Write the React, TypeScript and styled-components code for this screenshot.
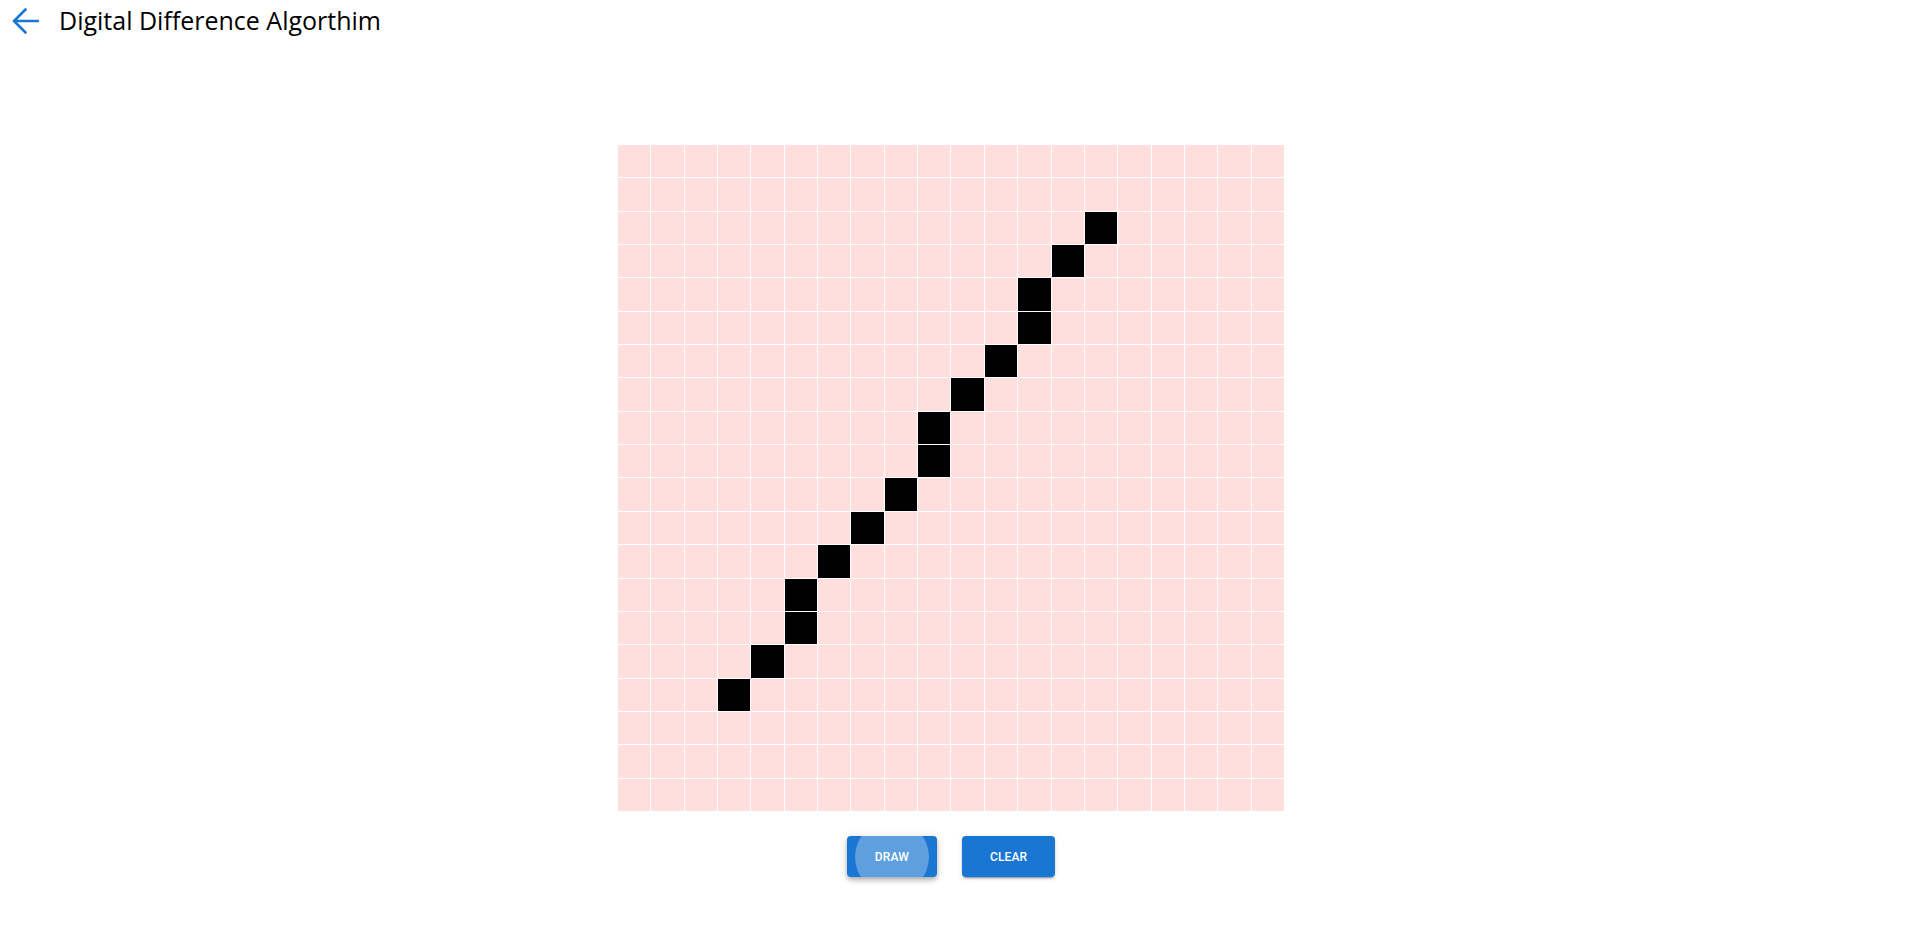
import React from "react";
import styled, { createGlobalStyle } from "styled-components";

const GlobalStyle = createGlobalStyle`
  html, body { margin: 0; padding: 0; background: #ffffff; }
  body { font-family: "Open Sans", "Noto Sans", sans-serif; }
`;

const Page = styled.div`
  display: flex;
  flex-direction: column;
  min-height: 937px;
`;

const Header = styled.header`
  display: flex;
  align-items: center;
  height: 40px;
  padding-left: 11px;
  gap: 20px;
`;

const BackButton = styled.button`
  display: flex;
  align-items: center;
  justify-content: center;
  padding: 0;
  border: none;
  background: transparent;
  cursor: pointer;
  width: 28px;
  height: 28px;
  margin-top: 1px;
`;

const Title = styled.h1`
  margin: 0;
  font-family: "Open Sans", "Noto Sans", sans-serif;
  font-size: 25px;
  font-weight: 500;
  color: #000;
  letter-spacing: 0;
`;

const Main = styled.main`
  display: flex;
  flex-direction: column;
  align-items: center;
  padding-top: 105px;
  padding-right: 9px;
  gap: 25px;
`;

const Grid = styled.div`
  display: grid;
  grid-template-columns: repeat(20, 1fr);
  grid-template-rows: repeat(20, 1fr);
  gap: 1px;
  width: 666px;
  height: 666px;
  background: #ffffff;
`;

const Cell = styled.div<{ $on: boolean }>`
  background: ${(p) => (p.$on ? "#000000" : "#ffdede")};
`;

const Actions = styled.div`
  display: flex;
  gap: 25px;
`;

const Button = styled.button<{ $raised?: boolean }>`
  position: relative;
  overflow: hidden;
  height: 41px;
  padding: 0 28px;
  border: none;
  border-radius: 4px;
  background: #1976d2;
  color: #ffffff;
  font-family: Roboto, "Liberation Sans", sans-serif;
  font-weight: 500;
  font-size: 12px;
  letter-spacing: 0.15px;
  text-transform: uppercase;
  cursor: pointer;
  box-shadow: ${(p) =>
    p.$raised
      ? "0px 2px 4px -1px rgba(0,0,0,0.2), 0px 4px 5px 0px rgba(0,0,0,0.14), 0px 1px 10px 0px rgba(0,0,0,0.12)"
      : "0px 3px 1px -2px rgba(0,0,0,0.2), 0px 2px 2px 0px rgba(0,0,0,0.14), 0px 1px 5px 0px rgba(0,0,0,0.12)"};
`;

const Ripple = styled.span`
  position: absolute;
  left: 50%;
  top: 50%;
  width: 74px;
  height: 74px;
  margin-left: -37px;
  margin-top: -37px;
  border-radius: 50%;
  background: rgba(255, 255, 255, 0.3);
  pointer-events: none;
`;

const Label = styled.span`
  position: relative;
`;

const ON: Array<[number, number]> = [
  [14, 2],
  [13, 3],
  [12, 4],
  [12, 5],
  [11, 6],
  [10, 7],
  [9, 8],
  [9, 9],
  [8, 10],
  [7, 11],
  [6, 12],
  [5, 13],
  [5, 14],
  [4, 15],
  [3, 16],
];

const onSet = new Set(ON.map(([c, r]) => `${c},${r}`));

export default function App() {
  const cells = [];
  for (let r = 0; r < 20; r++) {
    for (let c = 0; c < 20; c++) {
      cells.push(<Cell key={`${c}-${r}`} $on={onSet.has(`${c},${r}`)} />);
    }
  }
  return (
    <Page>
      <GlobalStyle />
      <Header>
        <BackButton aria-label="back">
          <svg width="27" height="26" viewBox="0 0 27 26" fill="none">
            <path
              d="M2 13H26 M13.5 1.5L2 13l11.5 11.5"
              stroke="#1976d2"
              strokeWidth="2.6"
              strokeLinecap="round"
              strokeLinejoin="round"
            />
          </svg>
        </BackButton>
        <Title>Digital Difference Algorthim</Title>
      </Header>
      <Main>
        <Grid>{cells}</Grid>
        <Actions>
          <Button $raised>
            <Ripple />
            <Label>Draw</Label>
          </Button>
          <Button>
            <Label>Clear</Label>
          </Button>
        </Actions>
      </Main>
    </Page>
  );
}
